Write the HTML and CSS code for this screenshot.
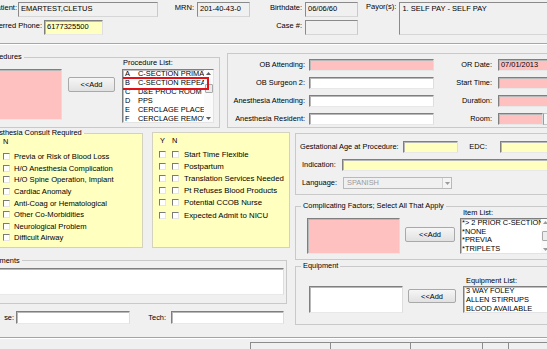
FILE: index.html
```html
<!DOCTYPE html>
<html lang="en">
<head>
<meta charset="utf-8">
<title>Procedure Scheduling</title>
<link rel="stylesheet" href="styles.css">
</head>
<body>
<div class="form">
  <div class="header">
    <div class="hcol">
      <div class="hrow">
        <span class="lbl lbl-pat">Patient:</span>
        <div class="tb ro tb-name">EMARTEST,CLETUS</div>
        <span class="lbl lbl-mrn">MRN:</span>
        <div class="tb ro tb-mrn">201-40-43-0</div>
      </div>
      <div class="hrow">
        <span class="lbl lbl-phone">Preferred Phone:</span>
        <div class="tb yellow tb-phone">6177325500</div>
      </div>
    </div>
    <div class="hcol">
      <div class="hrow"><span class="lbl lbl-bd">Birthdate:</span><div class="tb ro tb-bd">06/06/60</div></div>
      <div class="hrow"><span class="lbl lbl-bd">Case #:</span><div class="tb ro tb-bd"></div></div>
    </div>
    <div class="payor">
      <span class="lbl lbl-payor">Payor(s):</span>
      <div class="tb ro tb-payor">1. SELF PAY - SELF PAY</div>
    </div>
  </div>

  <div class="sec1">
    <fieldset class="grp proc">
      <legend>Procedures</legend>
      <div class="grp-body">
        <div class="tb pink proc-sel"></div>
        <button class="btn proc-add">&lt;&lt;Add</button>
        <div class="listcol proc-listcol">
          <div class="list-lbl">Procedure List:</div>
          <div class="listbox proc-list">
            <div class="lb-items proc-items">
              <div class="lb-item"><span class="code">A</span>C-SECTION PRIMARY</div>
              <div class="lb-item"><span class="code">B</span>C-SECTION REPEAT</div>
              <div class="lb-item"><span class="code">C</span>D&amp;E PROC ROOM</div>
              <div class="lb-item"><span class="code">D</span>PPS</div>
              <div class="lb-item"><span class="code">E</span>CERCLAGE PLACEMENT</div>
              <div class="lb-item"><span class="code">F</span>CERCLAGE REMOVAL</div>
            </div>
            <div class="sbar">
              <svg class="sb-arrow" width="5" height="3" viewBox="0 0 5 3"><path d="M0 3L2.5 0L5 3Z" fill="#5a5a5a"/></svg>
              <div class="sb-track"><div class="sb-thumb proc-thumb"></div></div>
              <svg class="sb-arrow" width="5" height="3" viewBox="0 0 5 3"><path d="M0 0L2.5 3L5 0Z" fill="#5a5a5a"/></svg>
            </div>
            <div class="highlight"></div>
          </div>
        </div>
      </div>
    </fieldset>

    <div class="box staff">
      <div class="staff-grid">
        <span class="slbl">OB Attending:</span><div class="tb pink"></div>
        <span class="slbl slbl2">OR Date:</span><div class="tb pink">07/01/2013</div>

        <span class="slbl">OB Surgeon 2:</span><div class="tb"></div>
        <span class="slbl slbl2">Start Time:</span><div class="tb pink"></div>

        <span class="slbl">Anesthesia Attending:</span><div class="tb"></div>
        <span class="slbl slbl2">Duration:</span><div class="tb pink"></div>

        <span class="slbl">Anesthesia Resident:</span><div class="tb"></div>
        <span class="slbl slbl2">Room:</span>
        <div class="room"><div class="tb pink room-field"></div><div class="room-btn"></div></div>
      </div>
    </div>
  </div>

  <div class="sec2">
    <div class="leftcol">
      <div class="yrow">
        <fieldset class="grp ypanel yp1">
          <legend>Anesthesia Consult Required</legend>
          <div class="yn-head yh1"><span class="yh-y">Y</span><span>N</span></div>
          <div class="cbrow r1"><span class="cb cb-y"></span><span class="cb cb-n"></span><span class="cbl">Previa or Risk of Blood Loss</span></div>
          <div class="cbrow r1"><span class="cb cb-y"></span><span class="cb cb-n"></span><span class="cbl">H/O Anesthesia Complication</span></div>
          <div class="cbrow r1"><span class="cb cb-y"></span><span class="cb cb-n"></span><span class="cbl">H/O Spine Operation, Implant</span></div>
          <div class="cbrow r1"><span class="cb cb-y"></span><span class="cb cb-n"></span><span class="cbl">Cardiac Anomaly</span></div>
          <div class="cbrow r1"><span class="cb cb-y"></span><span class="cb cb-n"></span><span class="cbl">Anti-Coag or Hematological</span></div>
          <div class="cbrow r1"><span class="cb cb-y"></span><span class="cb cb-n"></span><span class="cbl">Other Co-Morbidities</span></div>
          <div class="cbrow r1"><span class="cb cb-y"></span><span class="cb cb-n"></span><span class="cbl">Neurological Problem</span></div>
          <div class="cbrow r1"><span class="cb cb-y"></span><span class="cb cb-n"></span><span class="cbl">Difficult Airway</span></div>
        </fieldset>
        <div class="box ypanel yp2">
          <div class="yn-head yh2"><span class="yh-y2">Y</span><span>N</span></div>
          <div class="cbrow r2"><span class="cb cb-y2"></span><span class="cb cb-n2"></span><span class="cbl cbl2">Start Time Flexible</span></div>
          <div class="cbrow r2"><span class="cb cb-y2"></span><span class="cb cb-n2"></span><span class="cbl cbl2">Postpartum</span></div>
          <div class="cbrow r2"><span class="cb cb-y2"></span><span class="cb cb-n2"></span><span class="cbl cbl2">Translation Services Needed</span></div>
          <div class="cbrow r2"><span class="cb cb-y2"></span><span class="cb cb-n2"></span><span class="cbl cbl2">Pt Refuses Blood Products</span></div>
          <div class="cbrow r2"><span class="cb cb-y2"></span><span class="cb cb-n2"></span><span class="cbl cbl2">Potential CCOB Nurse</span></div>
          <div class="cbrow r2"><span class="cb cb-y2"></span><span class="cb cb-n2"></span><span class="cbl cbl2">Expected Admit to NICU</span></div>
        </div>
      </div>

      <fieldset class="grp comments">
        <legend>Comments</legend>
        <div class="tb comments-text"></div>
      </fieldset>

      <div class="nrow">
        <span class="lbl lbl-nurse">Nurse:</span>
        <div class="tb tb-nurse"></div>
        <span class="lbl lbl-tech">Tech:</span>
        <div class="tb tb-tech"></div>
      </div>
    </div>

    <div class="rightcol">
      <div class="box gest">
        <div class="grow">
          <span class="glbl gl-ga">Gestational Age at Procedure:</span>
          <div class="tb yellow tb-ga"></div>
          <span class="glbl gl-edc">EDC:</span>
          <div class="tb yellow tb-edc"></div>
        </div>
        <div class="grow">
          <span class="glbl gl-ind">Indication:</span>
          <div class="tb yellow tb-ind"></div>
        </div>
        <div class="grow">
          <span class="glbl gl-lang">Language:</span>
          <div class="combo">
            <span class="combo-text">SPANISH</span>
            <span class="combo-btn"><svg width="5" height="3" viewBox="0 0 5 3"><path d="M0 0L2.5 3L5 0Z" fill="#9a9a9a"/></svg></span>
          </div>
        </div>
      </div>

      <fieldset class="grp comp">
        <legend>Complicating Factors; Select All That Apply</legend>
        <div class="grp-body">
          <div class="tb pink comp-sel"></div>
          <button class="btn comp-add">&lt;&lt;Add</button>
          <div class="listcol comp-listcol">
            <div class="list-lbl">Item List:</div>
            <div class="listbox comp-list">
              <div class="lb-items">
                <div class="lb-item">*&gt; 2 PRIOR C-SECTION</div>
                <div class="lb-item">*NONE</div>
                <div class="lb-item">*PREVIA</div>
                <div class="lb-item">*TRIPLETS</div>
              </div>
              <div class="sbar">
                <svg class="sb-arrow" width="5" height="3" viewBox="0 0 5 3"><path d="M0 3L2.5 0L5 3Z" fill="#9a9a9a"/></svg>
                <div class="sb-track"><div class="sb-thumb comp-thumb"></div></div>
                <svg class="sb-arrow" width="5" height="3" viewBox="0 0 5 3"><path d="M0 0L2.5 3L5 0Z" fill="#9a9a9a"/></svg>
              </div>
            </div>
          </div>
        </div>
      </fieldset>

      <fieldset class="grp equip">
        <legend>Equipment</legend>
        <div class="grp-body">
          <div class="tb equip-sel"></div>
          <button class="btn equip-add">&lt;&lt;Add</button>
          <div class="listcol equip-listcol">
            <div class="list-lbl">Equipment List:</div>
            <div class="listbox equip-list">
              <div class="lb-items equip-items">
                <div class="lb-item">3 WAY FOLEY</div>
                <div class="lb-item">ALLEN STIRRUPS</div>
                <div class="lb-item">BLOOD AVAILABLE</div>
              </div>
            </div>
          </div>
        </div>
      </fieldset>
    </div>
  </div>

  <div class="sep"></div>
  <div class="bottom">
    <div class="strip">
      <span class="cell c1"></span><span class="cell c2"></span><span class="cell c3"></span><span class="cell c4"></span>
    </div>
  </div>
</div>
</body>
</html>
```
FILE: styles.css
```css
* { box-sizing: border-box; }
html, body { margin: 0; padding: 0; }
body {
  width: 547px;
  height: 349px;
  overflow: hidden;
  background: #f0f0f0;
  font-family: "Liberation Sans", Arial, sans-serif;
  font-size: 7.4px;
  color: #000;
}
.form { width: 640px; margin-left: -30px; }

/* generic controls */
.tb {
  background: #fff;
  border: 1px solid;
  border-color: #7f7f7f #dedede #e8e8e8 #7f7f7f;
  box-shadow: inset 1px 1px 0 #b8b8b8;
  padding: 0 2px;
  line-height: 10px;
  white-space: nowrap;
  overflow: hidden;
}
.ro { background: #f0f0f0; border-color: #8a8a8a #c9c9c9 #d6d6d6 #8a8a8a; box-shadow: none; }
.yellow { background: #ffffc0; }
.pink { background: #ffc0c0; }
.btn {
  font: inherit;
  color: #000;
  padding: 0;
  background: linear-gradient(#f6f6f6, #e1e1e1);
  border: 1px solid #a9a9a9;
  border-radius: 2px;
  flex: none;
}
.lbl { white-space: nowrap; text-align: right; line-height: 12px; flex: none; }

/* header */
.header {
  display: flex;
  align-items: flex-start;
  height: 44px;
  padding-top: 2px;
  border-bottom: 1px solid #a7a7a7;
  box-shadow: 0 1px 0 #fff;
  font-size: 7.5px;
}
.hcol { display: flex; flex-direction: column; gap: 3px; }
.hrow { display: flex; height: 15px; }
.hrow .tb { line-height: 11px; }
.lbl-pat { width: 47px; margin-right: 1px; }
.tb-name { width: 140px; }
.lbl-mrn { width: 36px; margin-right: 3px; }
.tb-mrn { width: 53px; }
.lbl-phone { width: 72px; margin-right: 2px; }
.tb-phone { width: 59px; }
.lbl-bd { width: 52px; margin-right: 3px; }
.tb-bd { width: 53px; }
.payor { display: flex; margin-left: 8px; }
.lbl-payor { margin-right: 3px; line-height: 10px; }
.tb-payor { width: 200px; height: 33px; line-height: 11px; }

/* group boxes */
.grp {
  margin: 0;
  padding: 0;
  min-width: 0;
  border: 1px solid #c9c9c9;
}
.grp > legend {
  margin-left: 5px;
  padding: 0 2px;
  line-height: 8px;
  white-space: nowrap;
}
.box { border: 1px solid #c9c9c9; }
.grp-body { display: flex; align-items: flex-start; }
.listcol { flex: none; display: flex; flex-direction: column; }
.list-lbl { line-height: 9px; padding-left: 1px; white-space: nowrap; }

.listbox {
  position: relative;
  display: flex;
  background: #fff;
  border: 1px solid;
  border-color: #7f7f7f #e3e3e3 #e3e3e3 #7f7f7f;
  box-shadow: inset 1px 1px 0 #c0c0c0;
  overflow: hidden;
}
.lb-items { flex: 1; min-width: 0; overflow: hidden; padding-left: 1px; }
.lb-item { line-height: 9px; white-space: nowrap; }
.code { display: inline-block; width: 14px; padding-left: 1px; }
.sbar {
  width: 9px;
  flex: none;
  display: flex;
  flex-direction: column;
  align-items: center;
  background: #fafafa;
  padding: 2px 0;
}
.sb-arrow { flex: none; }
.sb-track { flex: 1; width: 100%; }
.sb-thumb {
  width: 8px;
  margin-left: 1px;
  background: #ededed;
  border: 1px solid #a8a8a8;
  border-radius: 1px;
}
.highlight {
  position: absolute;
  left: -4px;
  top: 7px;
  width: 90px;
  height: 13px;
  border: 2px solid #e2121b;
}

/* section 1 */
.sec1 { display: flex; align-items: flex-start; height: 84px; }
.proc { margin: 9px 0 0 6px; width: 244px; height: 75px; flex: none; }
.proc-sel { width: 80px; height: 51px; margin: 8px 0 0 5px; }
.proc-add { width: 47px; height: 15px; margin: 16px 0 0 6px; }
.proc-listcol { margin: -3px 0 0 7px; }
.proc-list { width: 92px; height: 54px; margin-top: 2px; }
.proc-items { margin-top: -1px; }
.proc-thumb { height: 9px; margin-top: 9px; }

.staff { margin: 9px 0 0 7px; flex: 1; height: 75px; padding-top: 5px; }
.staff-grid {
  display: grid;
  grid-template-columns: 81px 125px 64px 60px;
  grid-auto-rows: 12px;
  row-gap: 6px;
}
.slbl { text-align: right; padding-right: 4px; line-height: 12px; white-space: nowrap; }
.slbl2 { padding-right: 6px; }
.staff-grid .tb { line-height: 10px; }
.room { display: flex; }
.room-field { width: 45px; }
.room-btn {
  width: 10px;
  background: #f7f7f7;
  border: 1px solid #c4c4c4;
  border-left-color: #9a9a9a;
}

/* section 2 */
.sec2 { display: flex; height: 209px; }
.leftcol { width: 320px; flex: none; display: flex; flex-direction: column; }
.rightcol { flex: 1; margin-left: 5px; display: flex; flex-direction: column; }

.yrow { display: flex; align-items: flex-start; height: 120px; }
.ypanel { background: #ffffc0; border-color: #d3d3bd; }
.yp1 { margin: 1px 0 0 8px; width: 165px; height: 119px; flex: none; }
.yp2 { margin: 4px 0 0 9px; width: 138px; height: 116px; flex: none; padding-top: 3px; }
.yn-head { display: flex; line-height: 10px; }
.yh1 { padding-left: 10px; height: 14px; }
.yh-y { width: 14px; }
.yh2 { padding-left: 7px; height: 12.5px; }
.yh-y2 { width: 12px; }
.cbrow { display: flex; align-items: center; white-space: nowrap; }
.r1 { height: 11.57px; }
.r2 { height: 12.1px; }
.cb {
  flex: none;
  width: 7px;
  height: 7px;
  background: #fff;
  border: 1px solid;
  border-color: #7a7a7a #e6e6e6 #e6e6e6 #7a7a7a;
}
.cb-y { margin-left: 10px; }
.cb-n { margin-left: 7px; }
.cbl { margin-left: 4px; font-size: 7.6px; }
.cb-y2 { margin-left: 6px; }
.cb-n2 { margin-left: 6px; }
.cbl2 { margin-left: 5px; font-size: 7.8px; }

.comments { margin: 8.5px 0 0 6px; width: 311px; height: 47.5px; flex: none; }
.comments-text { margin: 3.5px 0 0 4px; width: 303px; height: 27px; }

.nrow { display: flex; margin-top: 7px; height: 13px; }
.lbl-nurse {
  width: 10px;
  margin: 0 2px 0 34px;
  line-height: 13px;
  display: flex;
  justify-content: flex-end;
  overflow: hidden;
}
.tb-nurse { width: 114px; }
.lbl-tech { width: 36px; margin-right: 5px; line-height: 13px; }
.tb-tech { width: 113px; }

/* right column */
.gest { margin-top: 5px; height: 62px; padding-top: 7px; flex: none; }
.grow { display: flex; height: 12px; margin-bottom: 6px; }
.glbl { flex: none; line-height: 12px; white-space: nowrap; }
.gl-ga { width: 103px; padding-left: 4px; margin-right: 4px; }
.tb-ga { width: 55px; }
.gl-edc { width: 29px; text-align: right; margin-right: 13px; }
.tb-edc { width: 100px; }
.gl-ind { width: 46px; padding-left: 6px; }
.tb-ind { flex: 1; }
.gl-lang { width: 47px; padding-left: 6px; }
.combo {
  display: flex;
  width: 109px;
  border: 1px solid #b9b9b9;
  background: #f0f0f0;
}
.combo-text { flex: 1; color: #9b9b9b; padding-left: 3px; line-height: 10px; }
.combo-btn {
  width: 9px;
  display: flex;
  align-items: center;
  justify-content: center;
  border-left: 1px solid #d2d2d2;
  background: #f4f4f4;
}

.comp { margin-top: 7px; height: 58px; flex: none; }
.comp-sel { width: 93px; height: 36px; margin: 8px 0 0 11px; }
.comp-add { width: 50px; height: 15px; margin: 17px 0 0 5px; }
.comp-listcol { margin: -2.5px 0 0 5px; }
.comp-listcol .list-lbl { padding-left: 3px; }
.comp-list { width: 91px; height: 36px; margin-top: 1.5px; }
.comp-list .lb-item { line-height: 8.7px; }
.comp-thumb { height: 10px; margin-top: 7px; }

.equip { margin-top: 2px; height: 63px; flex: none; }
.equip-sel { width: 94px; height: 27px; margin: 16px 0 0 13px; }
.equip-add { width: 48px; height: 14px; margin: 19px 0 0 5px; }
.equip-listcol { margin: 5.5px 0 0 7px; }
.equip-listcol .list-lbl { padding-left: 3px; }
.equip-list { width: 90px; height: 27px; margin-top: 1.5px; }
.equip-items { padding-left: 2px; }
.equip-list .lb-item { line-height: 8.8px; }

/* bottom */
.sep { height: 2px; border-top: 1px solid #a4a4a4; border-bottom: 1px solid #fff; }
.bottom { padding: 3px 0 0 280px; }
.strip { display: flex; height: 12px; border-top: 1px solid #8c8c8c; border-left: 1px solid #8c8c8c; }
.cell { height: 100%; border-right: 1px solid #8c8c8c; }
.c1 { width: 80px; }
.c2 { width: 80px; }
.c3 { width: 72px; }
.c4 { width: 26px; }
```
